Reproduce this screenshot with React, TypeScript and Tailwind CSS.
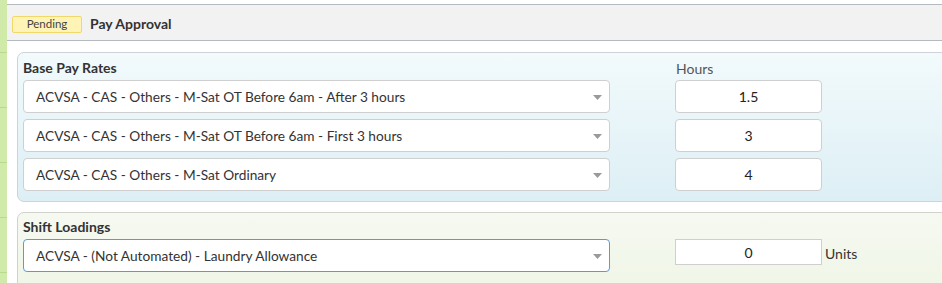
import { useState } from 'react';

const rates = [
  { name: 'ACVSA - CAS - Others - M-Sat OT Before 6am - After 3 hours', hours: '1.5' },
  { name: 'ACVSA - CAS - Others - M-Sat OT Before 6am - First 3 hours', hours: '3' },
  { name: 'ACVSA - CAS - Others - M-Sat Ordinary', hours: '4' },
];

const Caret = () => (
  <svg width="9" height="5" viewBox="0 0 9 5" className="shrink-0">
    <path d="M0 0h9L4.5 5z" fill="#9a9a9a" />
  </svg>
);

const Select = ({ value, focused }: { value: string; focused?: boolean }) => (
  <div
    className={
      'flex h-[33px] w-[587px] shrink-0 items-center justify-between rounded-[4px] border bg-white pl-[12px] pr-[6px] text-[13.7px] text-[#333] ' +
      (focused ? 'border-[#5b9ad6]' : 'border-[#cfcfcf]')
    }
  >
    <span className="mt-[1px]">{value}</span>
    <span className="mr-[1px] mt-[1px]">
      <Caret />
    </span>
  </div>
);

export default function App() {
  const [rows] = useState(rates);

  return (
    <div className="flex h-[283px] w-[942px] overflow-hidden bg-white font-['Lato','Liberation_Sans',sans-serif] text-[#333]">
      <div className="flex w-[7px] shrink-0 flex-col bg-[#d0eaa9]">
        {[0, 1, 2, 3, 4, 5].map((i) => (
          <div key={i} className="h-[55px] shrink-0 border-b border-[#b7da8c] first:h-[53px]" />
        ))}
      </div>

      <div className="flex min-w-0 flex-1 flex-col pt-[4px]">
        <div className="flex h-[37px] shrink-0 items-center border-y border-[#b5b9c0] bg-[#f2f2f2] pl-[5px] pt-[2px]">
          <span className="mt-[1px] flex h-[17px] w-[70px] items-center justify-center rounded-[2px] border border-[#f2d86a] bg-[#fff3b5] text-[11.5px] text-[#444]">
            Pending
          </span>
          <span className="ml-[8px] text-[14px] font-bold text-[#333]">Pay Approval</span>
        </div>

        <div className="flex flex-col gap-[10px] pl-[10px] pt-[11px]">
          <div className="mr-[-20px] flex h-[150px] flex-col rounded-l-[7px] border border-[#cdd3d6] bg-gradient-to-b from-[#f2fafc] to-[#ddeff5] pl-[5px] pt-[4px]">
            <div className="mb-[2px] flex h-[21px] items-center">
              <span className="w-[587px] shrink-0 text-[14px] font-bold">Base Pay Rates</span>
              <span className="ml-[66px] mt-[2px] text-[14px] text-[#555]">Hours</span>
            </div>
            <div className="flex flex-col gap-[6px]">
              {rows.map((r) => (
                <div key={r.name} className="flex items-center gap-[65px]">
                  <Select value={r.name} />
                  <div className="flex h-[33px] w-[147px] items-center justify-center rounded-[4px] border border-[#cfcfcf] bg-white text-[14px] text-[#222]">
                    {r.hours}
                  </div>
                </div>
              ))}
            </div>
          </div>

          <div className="mr-[-20px] flex h-[90px] flex-col rounded-l-[7px] border border-[#cfd3cc] bg-gradient-to-b from-[#f6f9f1] to-[#eef5e5] pl-[5px] pt-[3px]">
            <div className="mb-[2px] flex h-[21px] items-center text-[14px] font-bold">Shift Loadings</div>
            <div className="flex items-start gap-[65px]">
              <Select value="ACVSA - (Not Automated) - Laundry Allowance" focused />
              <div className="flex h-[26px] w-[147px] items-center justify-center border border-[#cfcfcf] bg-white text-[14px] text-[#222]">
                0
              </div>
              <span className="ml-[-62px] mt-[4px] text-[14px] text-[#333]">Units</span>
            </div>
          </div>
        </div>
      </div>
    </div>
  );
}
